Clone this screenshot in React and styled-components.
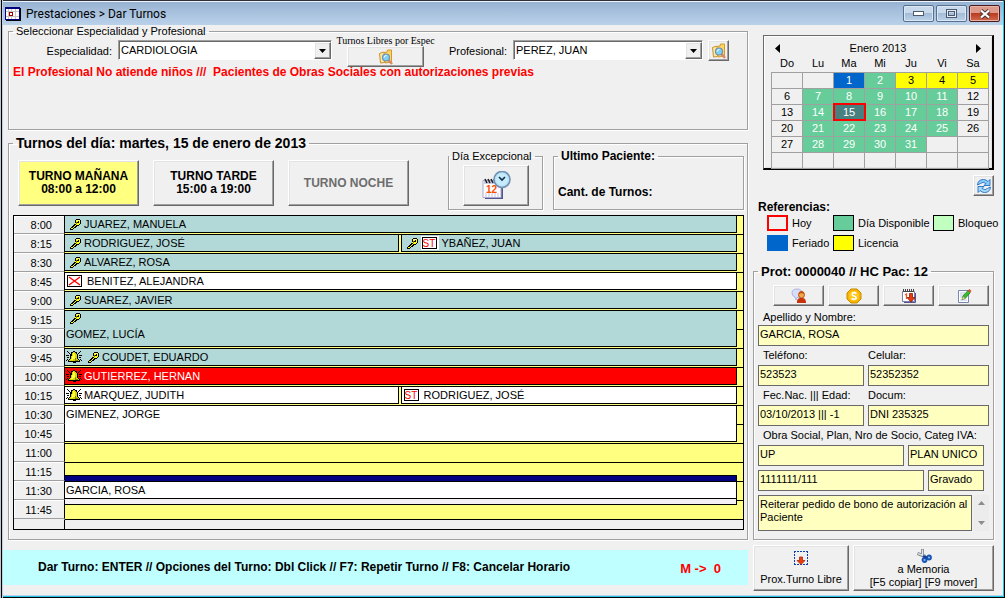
import React from "react";
import styled, { createGlobalStyle, css } from "styled-components";

const Global = createGlobalStyle`
  * { box-sizing: border-box; }
  body { margin: 0; background: #f0f0f0; color: #000; font: 11px/13px "Liberation Sans", Arial, sans-serif; }
  button, input, select, textarea { font: inherit; color: inherit; margin: 0; border-radius: 0; }
  svg { display: block; flex: none; }
`;

const Window = styled.div`
  display: flex;
  flex-direction: column;
  min-height: 100vh;
  padding: 1px 2px 3px 3px;
  background: #f0f0f0;
  box-shadow: inset 1px 0 #c4c8cc, inset 2px 0 #000, inset 3px 0 #b9d1ea, inset 0 1px #30303a,
    inset -1px -1px #000, inset -2px -2px #22c4e8, inset 0 -3px #b9d1ea;
`;

const TitleBar = styled.header`
  display: flex;
  align-items: center;
  height: 24px;
  padding: 0 3px 0 2px;
  border-top: 1px solid #eef4fb;
  background: linear-gradient(#98b3d2, #bad1ea);
`;

const Title = styled.h1`
  flex: 1;
  margin: 0 0 0 5px;
  font: 12px/16px Roboto, "Open Sans", sans-serif;
`;

const WindowButtons = styled.div`
  display: flex;
  gap: 2px;
`;

const WindowButton = styled.button`
  display: flex;
  align-items: center;
  justify-content: center;
  width: 31px;
  height: 17px;
  padding: 0;
  border: 1px solid #56708f;
  border-radius: 2px;
  background: linear-gradient(#c8d9ec 45%, #a3bcd8 50%, #bdd2e8);
  box-shadow: inset 0 0 0 1px #dbe7f4;
  ${(p) =>
    p.$close &&
    css`
      border-color: #4b1a1a;
      background: linear-gradient(#dd9a8a 45%, #b93c22 50%, #d0694c);
      box-shadow: inset 0 0 0 1px #e7b3a8;
    `}
`;

const Body = styled.div`
  display: grid;
  grid-template-columns: minmax(0, 1fr) 241px;
  gap: 5px;
  padding-right: 9px;
`;

const MainColumn = styled.main`
  display: flex;
  flex-direction: column;
`;

const SideColumn = styled.aside`
  display: flex;
  flex-direction: column;
  padding-top: 10px;
`;

const Group = styled.fieldset`
  min-width: 0;
  margin: 0;
  padding: 0 3px 0 4px;
  border: 1px solid #a0a0a0;
  box-shadow: 1px 1px #fff, inset 1px 1px #fff;
`;

const Legend = styled.legend`
  padding: 0 3px;
  font-size: ${(p) => p.$size || 11}px;
  font-weight: ${(p) => (p.$bold ? 700 : 400)};
  line-height: ${(p) => (p.$size === 14 ? 14 : 13)}px;
`;

const FilterGroup = styled(Group)`
  min-height: 105px;
  margin-left: 5px;
`;

const DayGroup = styled(Group)`
  margin: 6px 0 0 5px;
  padding-bottom: 9px;
`;

const FilterRow = styled.div`
  display: flex;
  align-items: flex-start;
  height: 28px;
  padding-top: 2px;
`;

const FilterLabel = styled.label`
  width: ${(p) => p.$width}px;
  padding: 5px 6px 0 0;
  text-align: right;
`;

const Combo = styled.span`
  position: relative;
  width: ${(p) => p.$width}px;
`;

const ComboSelect = styled.select`
  display: block;
  appearance: none;
  width: 100%;
  height: 20px;
  padding: 0 20px 0 2px;
  border: 1px solid #a0a0a0;
  border-right-color: #fff;
  border-bottom-color: #fff;
  outline: 0;
  background: #fff;
  box-shadow: inset 1px 1px #696969;
`;

const raised = css`
  border: 1px solid #fff;
  border-right-color: #696969;
  border-bottom-color: #696969;
  background: #f0f0f0;
  box-shadow: inset -1px -1px #a0a0a0, inset 1px 1px #e3e3e3;
`;

const ComboArrow = styled.span`
  ${raised}
  position: absolute;
  top: 2px;
  right: 1px;
  display: flex;
  align-items: center;
  justify-content: center;
  width: 17px;
  height: 17px;
  pointer-events: none;
`;

const Button = styled.button`
  ${raised}
  display: flex;
  flex-direction: column;
  align-items: center;
  justify-content: center;
  padding: 0;
  width: ${(p) => (p.$width ? `${p.$width}px` : "auto")};
  height: ${(p) => p.$height || 21}px;
`;

const SearchButton = styled(Button)`
  width: 21px;
  margin-left: 5px;
`;

const FreeSlots = styled.div`
  display: flex;
  flex-direction: column;
  align-items: center;
  width: 107px;
  margin: -4px 0 0;
  font: 10px/10px "Liberation Serif", serif;
  white-space: nowrap;
`;

const Notice = styled.p`
  margin: 0;
  color: #f00;
  font-weight: 700;
  font-size: 12px;
  white-space: pre;
`;

const ShiftRow = styled.div`
  display: flex;
  align-items: flex-end;
  height: 60px;
  padding-left: 5px;
`;

const ShiftButton = styled(Button)`
  width: 121px;
  height: 46px;
  margin: 0 14px 4px 0;
  font-size: 12px;
  font-weight: 700;
  line-height: 13px;
  ${(p) => p.$active && "background: #ffff80;"}
  &:disabled { color: #6d6d6d; }
`;

const ExceptionGroup = styled(Group)`
  display: flex;
  justify-content: center;
  flex: none;
  width: 95px;
  height: 60px;
  margin: 0 10px 0 25px;
  padding: 2px 0 0;
`;

const LastPatient = styled(Group)`
  flex: 1;
  height: 60px;
  font-size: 12px;
  font-weight: 700;
`;

const TurnCount = styled.p`
  margin: 23px 0 0;
`;

const Schedule = styled.div`
  display: grid;
  grid-template-columns: 51px minmax(0, 1fr) 6px;
  grid-template-rows: repeat(16, 19px) 10px;
  margin-top: 5px;
  border: 1px solid #000;
  border-top: 0;
`;

const TimeCell = styled.div`
  grid-column: 1;
  grid-row: ${(p) => p.$row};
  padding-right: 12px;
  border: 1px solid #a0a0a0;
  border-width: 0 1px 1px 0;
  box-shadow: inset 1px 1px #fff;
  border-right: 1px solid #000;
  line-height: 20px;
  text-align: right;
  ${(p) => p.$row === 1 && "border-top: 1px solid #000; line-height: 18px;"}
`;

const Slot = styled.div`
  grid-column: 2 / 4;
  grid-row: ${(p) => p.$row};
  border-top: 1px solid #000;
  background: #ffff80;
`;

const Rest = styled.div`
  grid-column: ${(p) => p.$col};
  grid-row: 17;
  border-top: 1px solid ${(p) => (p.$col === "1" ? "transparent" : "#000")};
  ${(p) => p.$col === "1" && "border-right: 1px solid #000;"}
`;

const Bookings = styled.div`
  grid-column: 2;
  grid-row: ${(p) => p.$row} / span ${(p) => p.$span};
  display: flex;
  gap: 2px;
  margin-bottom: 1px;
`;

const tones = {
  attended: "background: #b2d8d8;",
  open: "background: #fff;",
  urgent: "background: #f00; color: #fff;",
};

const Booking = styled.div`
  flex: 1 1 ${(p) => (p.$second ? "336px" : "333px")};
  display: flex;
  flex-direction: ${(p) => (p.$tall ? "column" : "row")};
  align-items: ${(p) => (p.$tall ? "flex-start" : "center")};
  min-width: 0;
  padding-left: 1px;
  border: 1px solid #000;
  border-left-width: ${(p) => (p.$second ? 1 : 0)}px;
  line-height: 16px;
  white-space: nowrap;
  ${(p) => tones[p.$tone]}
`;

const Selected = styled.div`
  grid-column: 2;
  grid-row: 14 / span 3;
  display: flex;
  flex-direction: column;
  margin: 13px 0 14px;
  border: 1px solid #000;
  border-left: 0;
  background: #fff;
`;

const SelectedBar = styled.div`
  height: 6px;
  border-bottom: 1px solid #000;
  background: #000080;
`;

const SelectedName = styled.div`
  flex: 1;
  padding-left: 1px;
  line-height: 16px;
`;

const SelectedFoot = styled.div`
  height: 6px;
  border-top: 1px solid #000;
  background: #f4f0f4;
`;

const Mark = styled.span`
  display: flex;
  align-items: center;
  width: ${(p) => p.$width}px;
  height: 15px;
  padding-left: ${(p) => p.$pad || 0}px;
`;

const Tag = styled.span`
  margin-right: 3px;
  border: 1px solid #fff;
  border-right-width: 2px;
  background: #fff;
`;

const TagBox = styled.span`
  display: block;
  width: 15px;
  height: 12px;
  border: 1px solid #000;
  color: #f00;
  font-size: 10px;
  line-height: 11px;
  text-align: center;
`;

const HelpBar = styled.footer`
  display: flex;
  align-items: center;
  height: 35px;
  margin-top: 10px;
  padding: 0 27px 0 35px;
  background: #c0ffff;
  font-size: 12px;
  font-weight: 700;
`;

const Memory = styled.output`
  margin-left: auto;
  padding-top: 2px;
  color: #f00;
  font-size: 13px;
  white-space: pre;
`;

const Calendar = styled.section`
  height: 135px;
  margin-left: 10px;
  padding: 4px 3px 0 7px;
  border: 1px solid #696969;
  border-width: 1px 2px 2px 1px;
  border-right-color: #000;
  border-bottom-color: #000;
  box-shadow: inset 1px 1px #fff, inset -1px -1px #e3e3e3;
`;

const CalendarNav = styled.div`
  display: flex;
  align-items: center;
  justify-content: space-between;
  height: 16px;
  padding: 0 8px 0 4px;
`;

const NavButton = styled.button`
  padding: 0;
  border: 0;
  background: none;
`;

const Days = styled.table`
  width: 100%;
  table-layout: fixed;
  border-collapse: collapse;
  line-height: 15px;
  text-align: center;
  th { height: 16px; padding: 0; font-weight: 400; }
`;

const dayTones = {
  free: "background: #66cc99; color: #fff;",
  holiday: "background: #0066cc; color: #fff;",
  leave: "background: #ffff00;",
  today: "background: #488080; color: #fff; outline: 2px solid #f00; outline-offset: -1px;",
};

const Day = styled.td`
  height: 16px;
  padding: 0;
  border: 1px solid #a0a0a0;
  ${(p) => dayTones[p.$tone]}
`;

const Refresh = styled(Button)`
  align-self: flex-end;
  margin: 5px 0 4px;
`;

const RefTitle = styled.h2`
  margin: 0 0 1px 5px;
  font-size: 12px;
  line-height: 14px;
`;

const References = styled.ul`
  display: grid;
  grid-template-columns: 66px 100px 1fr;
  gap: 4px 0;
  margin: 0 -5px 0 14px;
  padding: 0;
  list-style: none;
`;

const Reference = styled.li`
  display: flex;
  align-items: center;
  gap: 4px;
  white-space: nowrap;
`;

const Swatch = styled.span`
  width: 21px;
  height: 16px;
  border: ${(p) => p.$line};
  background: ${(p) => p.$fill};
`;

const PatientGroup = styled(Group)`
  margin-top: 14px;
  padding: 7px 4px 8px 4px;
`;

const Toolbar = styled.div`
  display: flex;
  gap: 4px;
  margin: 0 0 4px 15px;
  & > button { flex: 1; }
`;

const FieldRow = styled.div`
  display: flex;
  gap: 4px;
  margin-right: ${(p) => p.$right || 0}px;
  margin-bottom: ${(p) => p.$bottom || 0}px;
`;

const Field = styled.label`
  flex: ${(p) => (p.$width ? `0 0 ${p.$width}px` : "1")};
  min-width: 0;
`;

const FieldName = styled.span`
  display: block;
  padding-left: ${(p) => p.$pad}px;
  line-height: ${(p) => p.$line || 15}px;
  white-space: nowrap;
`;

const fieldBox = css`
  display: block;
  width: 100%;
  border: 1px solid #696969;
  outline: 0;
  background: #ffffc0;
`;

const TextBox = styled.input`
  ${fieldBox}
  height: 21px;
  padding: 0 1px 3px;
`;

const NoteRow = styled.div`
  display: flex;
  gap: 2px;
`;

const Note = styled.textarea`
  ${fieldBox}
  flex: 1;
  height: 36px;
  padding: 2px 1px;
  line-height: 13px;
  resize: none;
  overflow: hidden;
`;

const ScrollBar = styled.div`
  display: flex;
  flex-direction: column;
  align-items: center;
  justify-content: space-between;
  width: 15px;
  padding: 6px 0;
  background: #ececec;
`;

const Actions = styled.div`
  display: flex;
  gap: 4px;
  margin-top: 5px;
  & > button { line-height: 13px; }
`;

const ActionButton = styled(Button)`
  height: 46px;
  gap: ${(p) => p.$gap || 0}px;
`;

const KeyIcon = () => (
  <svg width="11" height="11" viewBox="0 0 11 11" shapeRendering="crispEdges">
    <path d="M6 0h4v1h1v4h-1v1H9v1H7v1H6v1H4v1H3v1H0V9h1V8h1V7h1V6h1V5h1V1h1z" fill="#000" />
    <path d="M6 1h4v4H9v1H6V5H5V4h1zM5 6h1v1H5zM4 7h1v1H4zM3 8h1v1H3zM2 9h1v1H1V9z" fill="#ff0" />
    <path d="M8 2h1v2H7V3h1z" fill="#000" />
    <path d="M6 3h1v2H6z" fill="#808000" />
    <path d="M7 1h2v1H7z" fill="#ffffc8" />
  </svg>
);

const BellIcon = () => (
  <svg width="16" height="12" viewBox="0 0 16 12" shapeRendering="crispEdges">
    <path d="M7 0h2v1h2v2h1v5h1v1h1v2h-4v1H7v-1H2V9h1V8h1V3h1V1h2z" fill="#000" />
    <path d="M7 1h2v1h1v1h1v5h1v1h1v1H3V9h1V8h1V5h1V2h1z" fill="#d8d800" />
    <path d="M7 2h1v1h1v5H7v1H5V8h1V5h1z" fill="#ffff40" />
    <path d="M9 7h1v2h2v1H9z" fill="#808000" />
    <path d="M1 0h1v1h1v1h1v1H3V2H2V1H1zM14 0h1v1h-1v1h-1v1h-1V2h1V1h1zM0 4h3v1H0zM13 4h3v1h-3zM1 6h2v1H1zM13 6h2v1h-2zM1 8h1v1H1v1H0V9h1zM14 8h1v1h1v1h-1V9h-1z" fill="#000" />
  </svg>
);

const CrossIcon = () => (
  <svg width="15" height="12" viewBox="0 0 15 12">
    <rect x=".5" y=".5" width="14" height="11" fill="#fff" stroke="#000" />
    <path d="M2 2l11 8M13 2L2 10" stroke="#f00" strokeWidth="1.4" />
  </svg>
);

const FolderSearchIcon = () => (
  <svg width="16" height="16" viewBox="0 0 16 16">
    <path d="M1.500 4.500l4-1.500 1 1v9.500l-4 .5z" fill="#ffe89a" stroke="#c8902c" />
    <path d="M6 3.500l3-.5.5-2h4v12l-6.500 1z" fill="#ffd562" stroke="#d29a30" />
    <path d="M10 10.500l4 4.500" stroke="#d98a62" strokeWidth="2.500" />
    <circle cx="8" cy="8.500" r="3.500" fill="#7fd0f4" stroke="#6f8fb5" strokeWidth="1.200" />
    <path d="M6 8.500q.5-2 2.500-2" stroke="#fff" fill="none" />
  </svg>
);

const CalendarClockIcon = () => (
  <svg width="30" height="30" viewBox="0 0 30 30">
    <path d="M4 11h18v17H4z" fill="#55558c" />
    <path d="M2 9.500h18v17H2z" fill="#fff" stroke="#a9a9cf" />
    <path d="M3 10h17v3H3z" fill="#cfcfe8" />
    <path d="M4 8l2 4M7 8l2 4M10 8l2 4M13 8l2 4" stroke="#222" strokeWidth="1.600" />
    <path d="M4 23h15M4 25h15" stroke="#c0c0e0" strokeDasharray="2 1" />
    <text x="5" y="22" fill="#ff4a00" fontFamily="Liberation Sans, sans-serif" fontSize="10" fontWeight="700">12</text>
    <circle cx="21" cy="8.500" r="8" fill="#b7e3f6" stroke="#7391b4" strokeWidth="1.600" />
    <circle cx="21" cy="8.500" r="6" fill="#c4ecfa" />
    <path d="M18 6l3 3 3-3" stroke="#16324f" strokeWidth="1.700" fill="none" />
  </svg>
);

const RefreshIcon = () => (
  <svg width="16" height="16" viewBox="0 0 16 16">
    <path d="M1.500 7Q2 1.500 7.500 1.500q2.500 0 4.500 2L14 1.500V7.500H8l2-2Q7 3 4.500 5.500z" fill="#8ccaf7" stroke="#1f6fc4" strokeWidth=".9" />
    <path d="M14.500 9q-.5 5.500-6 5.500-2.500 0-4.500-2L2 14.500V8.500h6l-2 2q3 2.500 5.500 0z" fill="#a9dafa" stroke="#1f6fc4" strokeWidth=".9" />
  </svg>
);

const UserTalkIcon = () => (
  <svg width="16" height="16" viewBox="0 0 16 16">
    <path d="M1 5q0-4 5-4t5 4-5 4.500L5 12 4 9Q1 8 1 5z" fill="#d9def8" stroke="#a2aadc" strokeWidth=".8" />
    <path d="M6 15q-.5-4.500 3-5h3q3 .5 3 5z" fill="#c8330c" />
    <circle cx="10.500" cy="7" r="3" fill="#f6a54a" stroke="#a8480c" strokeWidth=".8" />
    <path d="M7.500 6q.5-3 3-3t3 3q-3-1.500-6 0z" fill="#c0500f" />
  </svg>
);

const CoinIcon = () => (
  <svg width="16" height="16" viewBox="0 0 16 16">
    <path d="M5 1h6l4 4v6l-4 4H5l-4-4V5z" fill="#f7b500" stroke="#c98a00" />
    <circle cx="8" cy="8" r="5" fill="#ffc820" />
    <path d="M10.500 5.500Q8 4 6.500 5.200 5.500 7.500 8 8t2 2.600Q8 12 5.500 10.500" fill="none" stroke="#fff" strokeWidth="1.600" />
  </svg>
);

const CalendarDownIcon = () => (
  <svg width="16" height="16" viewBox="0 0 16 16">
    <path d="M1.500 3.500h12v10h-12z" fill="#fff" stroke="#7c7cae" />
    <path d="M14.500 5v9.500H3" fill="none" stroke="#55558c" />
    <path d="M2.500 1v3M4.500 1v3M6.500 1v3M8.500 1v3M10.500 1v3M12.500 1v3M2 3.500h11" stroke="#444" />
    <path d="M4 7l1.500-1v5" stroke="#f05a28" strokeWidth="1.300" fill="none" />
    <path d="M8.500 5.500h3v4H14l-4 4.500-4-4.500h2.500z" fill="#e8380c" stroke="#8c1c00" strokeWidth=".8" />
  </svg>
);

const EditIcon = () => (
  <svg width="16" height="16" viewBox="0 0 16 16">
    <path d="M2.500 2.500h10v12h-10z" fill="#fff" stroke="#7888b0" />
    <path d="M4 5h5M4 7h4M4 9h3M4 12h7" stroke="#b9c6e2" />
    <path d="M6 11.500l1-3.500 5-5.500 2.200 2.200L9.200 10.500z" fill="#3dbb30" stroke="#1d7a18" strokeWidth=".8" />
    <path d="M12 2.500L13.500 1l2 2L14 4.500z" fill="#e8442c" />
    <path d="M6 11.500l1-3 2 2z" fill="#f4cf94" />
  </svg>
);

const DropIcon = () => (
  <svg width="16" height="16" viewBox="0 0 16 16">
    <path d="M1 1.500h14M1 14.500h14M1.500 1v14M14.500 1v14" stroke="#0a3fb4" strokeDasharray="2 1" />
    <path d="M6.500 7h3v3.500h2.500L8 14.500l-4-4h2.500z" fill="#ee3c10" stroke="#a82800" strokeWidth=".8" />
  </svg>
);

const ScissorsIcon = () => (
  <svg width="16" height="15" viewBox="0 0 16 15">
    <path d="M6.500 1v7M1.500 5.500l8 3" stroke="#7d858d" strokeWidth="3" />
    <path d="M6.500 1.500V8M2 5.700l7 2.500" stroke="#dfe4e8" strokeWidth="1.400" />
    <circle cx="8.500" cy="12" r="2" fill="#8fb4ea" stroke="#1556b8" strokeWidth="1.800" />
    <circle cx="13" cy="9.500" r="2" fill="#8fb4ea" stroke="#1556b8" strokeWidth="1.800" />
    <path d="M7 8l4 1.500" stroke="#123f88" strokeWidth="2" />
  </svg>
);

const AppIcon = () => (
  <svg width="16" height="14" viewBox="0 0 16 14" shapeRendering="crispEdges">
    <path d="M1 1h15v13H1z" fill="#000" />
    <path d="M0 0h15v13H0z" fill="#000080" />
    <path d="M1 2h13v10H1z" fill="#fff" />
    <path d="M3 2h1v10H3zM6 2h1v10H6zM10 2h1v10h-1zM1 4h13v1H1zM1 9h13v1H1z" fill="#c4c4c4" />
    <path d="M4 5h4v4H4z" fill="#a00000" />
    <path d="M5 6h2v2H5z" fill="#fff" />
  </svg>
);

const Triangle = ({ d, w = 7, h = 4, fill = "#000" }) => (
  <svg width={w} height={h} viewBox={`0 0 ${w} ${h}`}>
    <path d={d} fill={fill} />
  </svg>
);

const times = ["8:00", "8:15", "8:30", "8:45", "9:00", "9:15", "9:30", "9:45", "10:00", "10:15", "10:30", "10:45", "11:00", "11:15", "11:30", "11:45"];

const bookings = [
  { row: 1, items: [{ marks: ["key"], name: "JUAREZ, MANUELA", tone: "attended" }] },
  { row: 2, items: [{ marks: ["key"], name: "RODRIGUEZ, JOSÉ", tone: "attended" }, { marks: ["key", "st"], name: "YBAÑEZ, JUAN", tone: "attended" }] },
  { row: 3, items: [{ marks: ["key"], name: "ALVAREZ, ROSA", tone: "attended" }] },
  { row: 4, items: [{ marks: ["cross"], name: "BENITEZ, ALEJANDRA", tone: "open" }] },
  { row: 5, items: [{ marks: ["key"], name: "SUAREZ, JAVIER", tone: "attended" }] },
  { row: 6, span: 2, items: [{ marks: ["key"], name: "GOMEZ, LUCÍA", tone: "attended" }] },
  { row: 8, items: [{ marks: ["bell", "key"], name: "COUDET, EDUARDO", tone: "attended" }] },
  { row: 9, items: [{ marks: ["bell"], name: "GUTIERREZ, HERNAN", tone: "urgent" }] },
  { row: 10, items: [{ marks: ["bell"], name: "MARQUEZ, JUDITH", tone: "open" }, { marks: ["st"], name: "RODRIGUEZ, JOSÉ", tone: "open" }] },
  { row: 11, span: 2, items: [{ marks: [], name: "GIMENEZ, JORGE", tone: "open" }] },
];

const marks = {
  key: <Mark key="key" $width={18} $pad={4}><KeyIcon /></Mark>,
  bell: <Mark key="bell" $width={18}><BellIcon /></Mark>,
  cross: <Mark key="cross" $width={21} $pad={1}><CrossIcon /></Mark>,
  st: <Tag key="st"><TagBox>ST</TagBox></Tag>,
};

const weekDays = ["Do", "Lu", "Ma", "Mi", "Ju", "Vi", "Sa"];

const toneOf = (day, column) => {
  if (!day) return undefined;
  if (day === 1) return "holiday";
  if (day === 15) return "today";
  if (day >= 3 && day <= 5) return "leave";
  return column > 0 && column < 6 ? "free" : undefined;
};

function MonthTable() {
  const weeks = Array.from({ length: 6 }, (_, w) =>
    Array.from({ length: 7 }, (_, c) => {
      const day = w * 7 + c - 1;
      return day > 0 && day < 32 ? day : null;
    })
  );
  return (
    <Days>
      <thead>
        <tr>{weekDays.map((d) => <th key={d} scope="col">{d}</th>)}</tr>
      </thead>
      <tbody>
        {weeks.map((week, w) => (
          <tr key={w}>
            {week.map((day, c) => <Day key={c} $tone={toneOf(day, c)}>{day}</Day>)}
          </tr>
        ))}
      </tbody>
    </Days>
  );
}

function ComboBox({ id, value, width }) {
  return (
    <Combo $width={width}>
      <ComboSelect id={id} defaultValue={value}>
        <option>{value}</option>
      </ComboSelect>
      <ComboArrow><Triangle d="M0 0h7L3.500 4z" /></ComboArrow>
    </Combo>
  );
}

function LabeledBox({ label, value, width, pad = 5, line }) {
  return (
    <Field $width={width}>
      <FieldName $pad={pad} $line={line}>{label}</FieldName>
      <TextBox defaultValue={value} />
    </Field>
  );
}

export default function App() {
  return (
    <Window>
      <Global />
      <TitleBar>
        <AppIcon />
        <Title>Prestaciones &gt; Dar Turnos</Title>
        <WindowButtons>
          <WindowButton aria-label="Minimizar">
            <svg width="11" height="5"><rect x=".5" y=".5" width="10" height="4" fill="#fff" stroke="#4d5a6e" /></svg>
          </WindowButton>
          <WindowButton aria-label="Maximizar">
            <svg width="11" height="9"><rect x="1.500" y="1.500" width="8" height="6" fill="none" stroke="#4d5a6e" strokeWidth="3" /><rect x="1.500" y="1.500" width="8" height="6" fill="none" stroke="#e6edf6" /></svg>
          </WindowButton>
          <WindowButton $close aria-label="Cerrar">
            <svg width="12" height="10"><path d="M2 1.500l8 7M10 1.500l-8 7" stroke="#4a3434" strokeWidth="4" /><path d="M2 1.500l8 7M10 1.500l-8 7" stroke="#fff" strokeWidth="2.200" /></svg>
          </WindowButton>
        </WindowButtons>
      </TitleBar>
      <Body>
        <MainColumn>
          <FilterGroup>
            <Legend>Seleccionar Especialidad y Profesional</Legend>
            <FilterRow>
              <FilterLabel htmlFor="especialidad" $width={105}>Especialidad:</FilterLabel>
              <ComboBox id="especialidad" value="CARDIOLOGIA" width={214} />
              <FreeSlots>
                <label htmlFor="libres">Turnos Libres por Espec</label>
                <Button id="libres" $width={77}><FolderSearchIcon /></Button>
              </FreeSlots>
              <FilterLabel htmlFor="profesional" $width={74}>Profesional:</FilterLabel>
              <ComboBox id="profesional" value="PEREZ, JUAN" width={190} />
              <SearchButton aria-label="Buscar profesional"><FolderSearchIcon /></SearchButton>
            </FilterRow>
            <Notice>{"El Profesional No atiende niños ///  Pacientes de Obras Sociales con autorizaciones previas"}</Notice>
          </FilterGroup>

          <DayGroup>
            <Legend $bold $size={14}>Turnos del día: martes, 15 de enero de 2013</Legend>
            <ShiftRow>
              <ShiftButton $active><span>TURNO MAÑANA</span><span>08:00 a 12:00</span></ShiftButton>
              <ShiftButton><span>TURNO TARDE</span><span>15:00 a 19:00</span></ShiftButton>
              <ShiftButton disabled>TURNO NOCHE</ShiftButton>
              <ExceptionGroup>
                <Legend>Día Excepcional</Legend>
                <Button aria-label="Día Excepcional" $width={66} $height={41}><CalendarClockIcon /></Button>
              </ExceptionGroup>
              <LastPatient>
                <Legend $bold $size={12}>Ultimo Paciente:</Legend>
                <TurnCount>Cant. de Turnos:</TurnCount>
              </LastPatient>
            </ShiftRow>
            <Schedule>
              {times.map((time, i) => (
                <React.Fragment key={time}>
                  <TimeCell $row={i + 1}>{time}</TimeCell>
                  <Slot $row={i + 1} />
                </React.Fragment>
              ))}
              <Rest $col="1" />
              <Rest $col="2 / 4" />
              {bookings.map(({ row, span = 1, items }) => (
                <Bookings key={row} $row={row} $span={span}>
                  {items.map((item, i) => (
                    <Booking key={item.name} $tone={item.tone} $second={i > 0} $tall={span > 1}>
                      {item.marks.map((m) => marks[m])}
                      {item.name}
                    </Booking>
                  ))}
                </Bookings>
              ))}
              <Selected>
                <SelectedBar />
                <SelectedName>GARCIA, ROSA</SelectedName>
                <SelectedFoot />
              </Selected>
            </Schedule>
          </DayGroup>

          <HelpBar>
            <span>Dar Turno: ENTER // Opciones del Turno: Dbl Click // F7: Repetir Turno // F8: Cancelar Horario</span>
            <Memory>{"M ->  0"}</Memory>
          </HelpBar>
        </MainColumn>

        <SideColumn>
          <Calendar>
            <CalendarNav>
              <NavButton aria-label="Mes anterior"><Triangle w={5} h={9} d="M5 0v9L0 4.500z" /></NavButton>
              <span>Enero 2013</span>
              <NavButton aria-label="Mes siguiente"><Triangle w={5} h={9} d="M0 0v9l5-4.500z" /></NavButton>
            </CalendarNav>
            <MonthTable />
          </Calendar>
          <Refresh aria-label="Actualizar" $width={21}><RefreshIcon /></Refresh>

          <RefTitle>Referencias:</RefTitle>
          <References>
            <Reference><Swatch $line="2px solid #f00" $fill="#f0f0f0" />Hoy</Reference>
            <Reference><Swatch $line="1px solid #000" $fill="#66cc99" />Día Disponible</Reference>
            <Reference><Swatch $line="1px solid #000" $fill="#c0ffc0" />Bloqueo</Reference>
            <Reference><Swatch $line="0" $fill="#0066cc" />Feriado</Reference>
            <Reference><Swatch $line="1px solid #000" $fill="#ffff00" />Licencia</Reference>
          </References>

          <PatientGroup>
            <Legend $bold $size={13}>Prot: 0000040 // HC Pac: 12</Legend>
            <Toolbar>
              <Button aria-label="Paciente"><UserTalkIcon /></Button>
              <Button aria-label="Pagos"><CoinIcon /></Button>
              <Button aria-label="Turnos"><CalendarDownIcon /></Button>
              <Button aria-label="Editar"><EditIcon /></Button>
            </Toolbar>
            <FieldRow>
              <LabeledBox label="Apellido y Nombre:" value="GARCIA, ROSA" />
            </FieldRow>
            <FieldRow>
              <LabeledBox label="Teléfono:" value="523523" width={106} line={19} />
              <LabeledBox label="Celular:" value="52352352" pad={0} line={19} />
            </FieldRow>
            <FieldRow>
              <LabeledBox label="Fec.Nac. ||| Edad:" value="03/10/2013 ||| -1" width={106} line={19} />
              <LabeledBox label="Docum:" value="DNI 235325" pad={0} line={19} />
            </FieldRow>
            <FieldName $pad={5} $line={19}>Obra Social, Plan, Nro de Socio, Categ IVA:</FieldName>
            <FieldRow $right={5} $bottom={4}>
              <Field $width={146}><TextBox aria-label="Obra Social" defaultValue="UP" /></Field>
              <Field><TextBox aria-label="Plan" defaultValue="PLAN UNICO" /></Field>
            </FieldRow>
            <FieldRow $right={5} $bottom={4}>
              <Field $width={166}><TextBox aria-label="Nro de Socio" defaultValue="1111111/111" /></Field>
              <Field><TextBox aria-label="Categ IVA" defaultValue="Gravado" /></Field>
            </FieldRow>
            <NoteRow>
              <Note aria-label="Observaciones" defaultValue="Reiterar pedido de bono de autorización al Paciente" />
              <ScrollBar>
                <Triangle d="M0 4h7L3.500 0z" fill="#8c8c8c" />
                <Triangle d="M0 0h7L3.500 4z" fill="#8c8c8c" />
              </ScrollBar>
            </NoteRow>
          </PatientGroup>

          <Actions>
            <ActionButton $width={96} $gap={7}><DropIcon /><span>Prox.Turno Libre</span></ActionButton>
            <ActionButton $width={141}><ScissorsIcon /><span>a Memoria</span><span>[F5 copiar] [F9 mover]</span></ActionButton>
          </Actions>
        </SideColumn>
      </Body>
    </Window>
  );
}
